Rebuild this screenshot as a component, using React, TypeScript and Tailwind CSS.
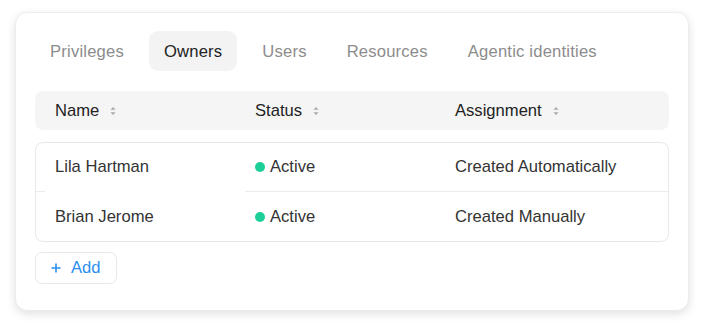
import React from 'react';

const tabs = ['Privileges', 'Owners', 'Users', 'Resources', 'Agentic identities'];

const rows = [
  { name: 'Lila Hartman', status: 'Active', assignment: 'Created Automatically' },
  { name: 'Brian Jerome', status: 'Active', assignment: 'Created Manually' },
];

const SortIcon = () => (
  <svg width="6" height="10" viewBox="0 0 6 10" className="ml-[11px]">
    <path d="M3 1 L5.5 3.8 L0.5 3.8 Z" fill="#a8a8a8" />
    <path d="M3 9 L5.5 6.2 L0.5 6.2 Z" fill="#a8a8a8" />
  </svg>
);

export default function App() {
  return (
    <div
      className="w-[705px] h-[330px] bg-white pl-[15px] pt-[12px]"
      style={{ fontFamily: '"Liberation Sans", Arial, sans-serif' }}
    >
      <div className="w-[674px] h-[299px] bg-white rounded-[12px] border border-[#ececec] shadow-[0_3px_10px_rgba(0,0,0,0.12)] px-[19px] pt-[18px]">
        <div className="flex gap-[10px]">
          {tabs.map((t) => (
            <div
              key={t}
              className={`h-[40px] px-[15px] pt-[2px] flex items-center rounded-[9px] text-[16.6px] tracking-[0.2px] ${
                t === 'Owners' ? 'bg-[#f3f3f3] text-[#222]' : 'text-[#8c8c8c]'
              }`}
            >
              {t}
            </div>
          ))}
        </div>

        <div className="mt-[20px] h-[39px] pt-[2px] bg-[#f5f5f5] rounded-[8px] flex items-center text-[16.6px] text-[#222]">
          <div className="w-[200px] pl-[20px] flex items-center">
            Name <SortIcon />
          </div>
          <div className="w-[200px] pl-[20px] flex items-center">
            Status <SortIcon />
          </div>
          <div className="flex-1 pl-[20px] flex items-center">
            Assignment <SortIcon />
          </div>
        </div>

        <div className="mt-[12px] border border-[#e8e8e8] rounded-[8px] text-[16.6px] text-[#333]">
          {rows.map((r, i) => {
            const line = i === 0 ? 'border-b border-[#ebebeb]' : '';
            return (
              <div key={r.name} className={`flex ${i === 0 ? 'h-[49px]' : 'h-[49px] pt-[1px]'}`}>
                <div className={`w-[9px] ${line}`} />
                <div className="w-[200px] pl-[10px] flex items-center">{r.name}</div>
                <div className={`w-[210px] pl-[10px] flex items-center gap-[5px] ${line}`}>
                  <span className="w-[10px] h-[10px] rounded-full bg-[#1ccf98]" />
                  {r.status}
                </div>
                <div className={`flex-1 flex items-center ${line}`}>{r.assignment}</div>
              </div>
            );
          })}
        </div>

        <div className="mt-[10px] w-[82px] h-[32px] border border-[#e8e8e8] rounded-[7px] flex items-center pl-[14px] text-[16.6px] text-[#2b8ff0]">
          <svg width="12" height="12" viewBox="0 0 12 12">
            <path d="M6 1.5 V10.5 M1.5 6 H10.5" stroke="#2b8ff0" strokeWidth="1.6" />
          </svg>
          <span className="ml-[9px]">Add</span>
        </div>
      </div>
    </div>
  );
}
